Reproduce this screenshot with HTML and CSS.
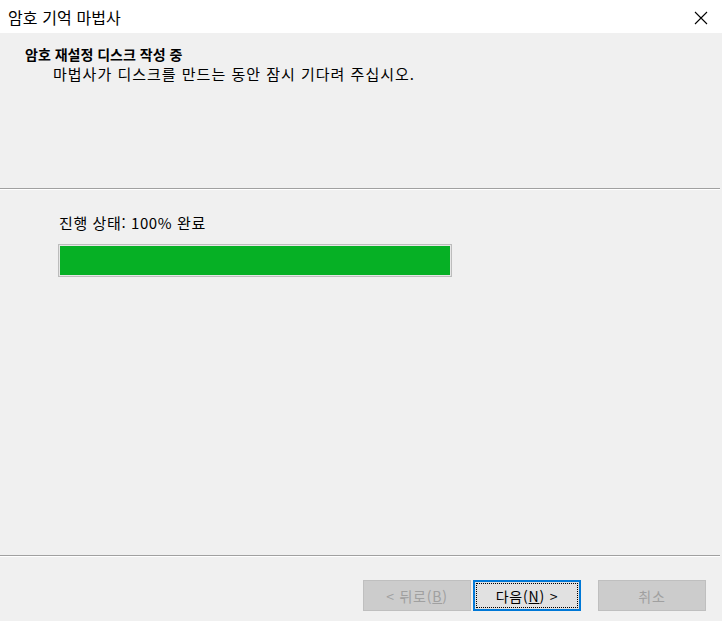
FILE: index.html
```html
<!DOCTYPE html>
<html lang="ko">
<head>
<meta charset="utf-8">
<link rel="stylesheet" href="styles.css">
</head>
<body>
<div class="window">
  <div class="titlebar">
    <span class="title">암호 기억 마법사</span>
    <span class="close" aria-label="닫기">
      <svg width="14" height="14" viewBox="0 0 14 14"><path d="M1 1 L13 13 M13 1 L1 13" stroke="#000" stroke-width="1.1" fill="none"/></svg>
    </span>
  </div>
  <div class="header">
    <div class="h-title">암호 재설정 디스크 작성 중</div>
    <div class="h-sub">마법사가 디스크를 만드는 동안 잠시 기다려 주십시오.</div>
  </div>
  <div class="sep"></div>
  <div class="content">
    <div class="label">진행 상태: 100% 완료</div>
    <div class="progress"><div class="fill" style="width:100%"></div></div>
  </div>
  <div class="sep"></div>
  <div class="footer">
    <button class="btn disabled">&lt; 뒤로(<u>B</u>)</button>
    <button class="btn primary"><span class="focus">다음(<u>N</u>) &gt;</span></button>
    <button class="btn disabled cancel">취소</button>
  </div>
</div>
</body>
</html>
```
FILE: styles.css
```css
html, body {
  margin: 0;
  padding: 0;
  background: #f0f0f0;
}
.window {
  width: 722px;
  height: 621px;
  display: flex;
  flex-direction: column;
  font-family: "Noto Sans CJK KR", "Noto Sans", sans-serif;
  color: #000;
  overflow: hidden;
}
.titlebar {
  height: 33px;
  background: #fff;
  display: flex;
  align-items: center;
  justify-content: space-between;
  padding: 0 14px 0 8px;
  flex-shrink: 0;
}
.title {
  font-size: 16px;
  letter-spacing: 0.1px;
}
.close {
  display: flex;
  width: 14px;
  height: 14px;
  margin-top: 2px;
}
.header {
  height: 155px;
  box-sizing: border-box;
  padding: 11px 0 0 25px;
  flex-shrink: 0;
  background: #f0f0f0;
}
.h-title {
  font-size: 14px;
  font-weight: bold;
  letter-spacing: 0;
  line-height: 20px;
}
.h-sub {
  font-size: 15px;
  letter-spacing: 1px;
  line-height: 20px;
  padding-left: 28px;
}
.sep {
  height: 1px;
  background: #a0a0a0;
  border-bottom: 1px solid #ffffff;
  margin-right: 2px;
  flex-shrink: 0;
}
.content {
  height: 365px;
  box-sizing: border-box;
  padding: 23px 0 0 58px;
  flex-shrink: 0;
}
.label {
  font-size: 15px;
  letter-spacing: 0.6px;
  line-height: 20px;
  padding-left: 1px;
}
.progress {
  margin-top: 11px;
  width: 394px;
  height: 33px;
  box-sizing: border-box;
  border: 1px solid #bcbcbc;
  background: #e6e6e6;
  padding: 1px;
}
.fill {
  height: 100%;
  background: #06b025;
}
.footer {
  display: flex;
  padding: 23px 0 0 363px;
  gap: 2px;
}
.btn {
  width: 108px;
  height: 31px;
  box-sizing: border-box;
  font-family: "Noto Sans CJK KR", "Noto Sans", sans-serif;
  font-size: 14px;
  letter-spacing: 0.8px;
  padding: 0;
  margin: 0;
  display: flex;
  align-items: center;
  justify-content: center;
}
.btn.disabled {
  background: #cccccc;
  border: 1px solid #bfbfbf;
  color: #a0a0a0;
}
.btn.cancel {
  margin-left: 15px;
}
.btn.primary {
  background: #e1e1e1;
  border: 2px solid #0078d7;
  color: #000;
  padding: 1px;
}
.focus {
  width: 100%;
  height: 100%;
  box-sizing: border-box;
  border: 1px dotted #000;
  display: flex;
  align-items: center;
  justify-content: center;
}
```
